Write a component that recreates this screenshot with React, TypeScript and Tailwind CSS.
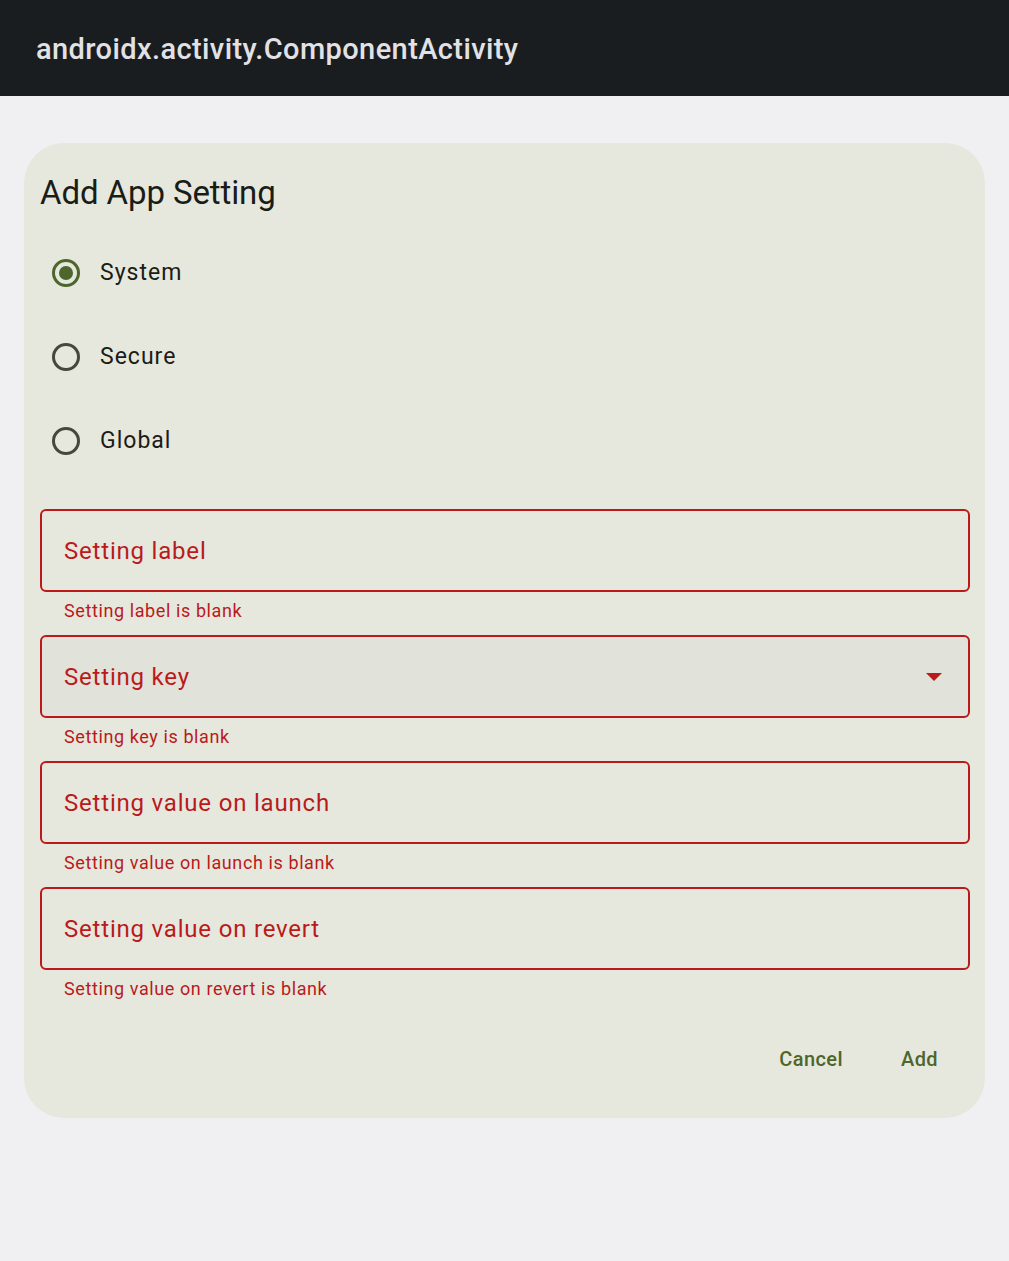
import { useState } from "react";

const fields = [
    { label: "Setting label", error: "Setting label is blank", dropdown: false },
    { label: "Setting key", error: "Setting key is blank", dropdown: true },
    { label: "Setting value on launch", error: "Setting value on launch is blank", dropdown: false },
    { label: "Setting value on revert", error: "Setting value on revert is blank", dropdown: false },
];

const options = ["System", "Secure", "Global"];

function Radio({ checked }: { checked: boolean }) {
    return (
        <span
            className={
                "w-[28px] h-[28px] rounded-full border-[3px] flex items-center justify-center " +
                (checked ? "border-[#4c662b]" : "border-[#44483d]")
            }
        >
            {checked && <span className="w-[14px] h-[14px] rounded-full bg-[#4c662b]"></span>}
        </span>
    );
}

export default function App() {
    const [selected, setSelected] = useState("System");

    return (
        <div className="min-h-[1261px] bg-[#f0f0f2] font-['Roboto',sans-serif]">
            {/* action bar */}
            <div className="h-[96px] bg-[#1a1d20] flex items-center px-[36px] pt-[4px]">
                <h1 className="text-[29px] font-medium text-[#e2e2e6] tracking-[0.4px]">
                    androidx.activity.ComponentActivity
                </h1>
            </div>

            <div className="px-[24px] pt-[47px]">
                <div className="bg-[#e6e8de] rounded-[40px] w-[961px] pt-[28px] pb-[35px] pl-[16px] pr-[15px]">
                    <h2 className="text-[33px] text-[#1a1c16] leading-[44px] tracking-[-0.1px]">Add App Setting</h2>

                    <div className="flex flex-col mt-[16px]">
                        {options.map((opt) => (
                            <button
                                key={opt}
                                onClick={() => setSelected(opt)}
                                className="h-[84px] flex items-center gap-[20px] pl-[12px] text-left"
                            >
                                <Radio checked={selected === opt} />
                                <span className="text-[23px] text-[#1a1c16] tracking-[1px]">{opt}</span>
                            </button>
                        ))}
                    </div>

                    <div className="flex flex-col mt-[26px]">
                        {fields.map((f) => (
                            <div key={f.label} className="flex flex-col">
                                <div
                                    className={
                                        "h-[83px] border-2 border-[#ba1a1a] rounded-[6px] flex items-center justify-between pl-[22px] pr-[26px] " +
                                        (f.dropdown ? "bg-[#e1e2d9]" : "")
                                    }
                                >
                                    <span className="text-[24px] text-[#ba1a1a] tracking-[0.8px]">{f.label}</span>
                                    {f.dropdown && (
                                        <svg width="16" height="8" viewBox="0 0 16 8">
                                            <path d="M0 0 L16 0 L8 8 Z" fill="#ba1a1a" />
                                        </svg>
                                    )}
                                </div>
                                <p className="h-[43px] pl-[24px] pt-[7px] text-[18px] text-[#ba1a1a] tracking-[0.6px] leading-[24px]">
                                    {f.error}
                                </p>
                            </div>
                        ))}
                    </div>

                    <div className="flex justify-end items-center gap-[26px] mt-[22px] pr-[16px]">
                        <button className="px-[16px] h-[48px] text-[20px] font-medium text-[#4c662b] tracking-[0.4px]">
                            Cancel
                        </button>
                        <button className="px-[16px] h-[48px] text-[20px] font-medium text-[#4c662b] tracking-[0.4px]">
                            Add
                        </button>
                    </div>
                </div>
            </div>
        </div>
    );
}
